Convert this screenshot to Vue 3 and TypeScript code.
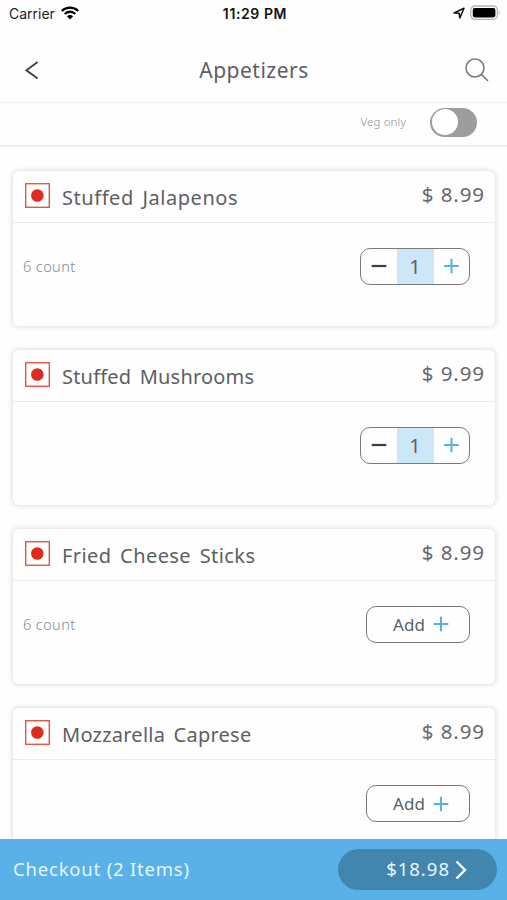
<script setup lang="ts">
import { computed, ref } from 'vue'

interface MenuItem {
  name: string
  note: string
  price: number
  quantity: number
  tracking: number
}

const vegOnly = ref(false)
const items = ref<MenuItem[]>([
  { name: 'Stuffed Jalapenos', note: '6 count', price: 8.99, quantity: 1, tracking: 0.55 },
  { name: 'Stuffed Mushrooms', note: '', price: 9.99, quantity: 1, tracking: 0.2 },
  { name: 'Fried Cheese Sticks', note: '6 count', price: 8.99, quantity: 0, tracking: 0.42 },
  { name: 'Mozzarella Caprese', note: '', price: 8.99, quantity: 0, tracking: 0.24 },
])

const count = computed(() => items.value.reduce((sum, i) => sum + i.quantity, 0))
const total = computed(() => items.value.reduce((sum, i) => sum + i.quantity * i.price, 0))
</script>

<template>
  <div class="screen">
    <div class="status">
      <div class="status-left">
        <span>Carrier</span>
        <svg class="wifi" viewBox="0 0 18 14" width="18" height="14">
          <path d="M0.8 5 A11.6 11.6 0 0 1 17.2 5" />
          <path d="M3.7 8 A7.4 7.4 0 0 1 14.3 8" />
          <path class="solid" d="M9 13.5 L5.9 10.3 A4.3 4.3 0 0 1 12.1 10.3 Z" />
        </svg>
      </div>
      <span class="clock">11:29 PM</span>
      <div class="status-right">
        <svg viewBox="0 0 12 12" width="12" height="12">
          <path class="arrow" d="M1 6 L11 1.2 L6.8 11 L6.2 6.2 Z" />
        </svg>
        <svg viewBox="0 0 31 16" width="31" height="16">
          <rect x="0.8" y="1" width="26.6" height="13.4" rx="4.2" fill="#fff" stroke="#b5b5b5" stroke-width="1.3" />
          <rect x="2.8" y="3" width="22.6" height="9.4" rx="2" fill="#000" />
          <path d="M28.8 5.3 Q30.8 7.7 28.8 10.1 Z" fill="#b5b5b5" />
        </svg>
      </div>
    </div>

    <header class="navbar">
      <svg class="back" viewBox="0 0 14 18" width="14" height="18">
        <path d="M12.6 1 L1.4 9.3 L12.6 17.4" />
      </svg>
      <h1>Appetizers</h1>
      <svg class="search" viewBox="0 0 24 24" width="24" height="24">
        <circle cx="10" cy="10" r="9" />
        <path d="M16.4 16.4 L23 23" />
      </svg>
    </header>

    <div class="filter">
      <span>Veg only</span>
      <button class="toggle" :class="{ on: vegOnly }" aria-label="Veg only" @click="vegOnly = !vegOnly">
        <i />
      </button>
    </div>

    <main class="list">
      <article v-for="item in items" :key="item.name" class="card">
        <div class="card-head">
          <svg class="mark" viewBox="0 0 25 25" width="25" height="25">
            <rect x="0.7" y="0.7" width="23.6" height="23.6" />
            <circle cx="12.3" cy="12.5" r="6.3" />
          </svg>
          <h2 :style="{ letterSpacing: `${item.tracking}px` }">{{ item.name }}</h2>
          <span class="price">$ {{ item.price.toFixed(2) }}</span>
        </div>
        <div class="card-body">
          <span class="note">{{ item.note }}</span>
          <div v-if="item.quantity > 0" class="stepper">
            <button aria-label="Remove one" @click="item.quantity--">
              <svg viewBox="0 0 16 16" width="16" height="16"><path class="minus" d="M0.7 8 H15.3" /></svg>
            </button>
            <span class="qty">{{ item.quantity }}</span>
            <button aria-label="Add one" @click="item.quantity++">
              <svg viewBox="0 0 16 16" width="16" height="16"><path class="plus" d="M1.2 8 H15.8 M8.5 0.7 V15.3" /></svg>
            </button>
          </div>
          <button v-else class="add" @click="item.quantity++">
            <span>Add</span>
            <svg viewBox="0 0 16 16" width="16" height="16"><path class="plus" d="M0.7 8 H15.3 M8 0.7 V15.3" /></svg>
          </button>
        </div>
      </article>
    </main>

    <footer class="checkout">
      <span class="summary">Checkout ({{ count }} Items)</span>
      <button class="total">
        <span>${{ total.toFixed(2) }}</span>
        <svg viewBox="0 0 12 20" width="12" height="20"><path d="M1.5 1.5 L10 10 L1.5 18.5" /></svg>
      </button>
    </footer>
  </div>
</template>

<style>
body {
  margin: 0;
  background: #fff;
}
</style>

<style scoped>
.screen {
  display: flex;
  flex-direction: column;
  width: 507px;
  height: 900px;
  overflow: hidden;
  background: #fefefe;
  color: #5d5e64;
  font-family: 'Noto Sans', sans-serif;
}

button {
  margin: 0;
  padding: 0;
  border: 0;
  background: none;
  color: inherit;
  font: inherit;
}

svg {
  display: block;
  flex: none;
  fill: none;
}

.status {
  display: grid;
  grid-template-columns: 1fr auto 1fr;
  align-items: center;
  flex: none;
  height: 27px;
  padding: 0 6px 0 9px;
  box-sizing: border-box;
  font-family: Inter, sans-serif;
  font-size: 14px;
  color: #222;
}

.status-left,
.status-right {
  display: flex;
  align-items: center;
  gap: 6px;
}

.status-left svg {
  margin-top: -2px;
}

.status-right {
  justify-content: flex-end;
  gap: 5px;
}

.status-right svg {
  margin-top: -1px;
}

.clock {
  color: #111;
  font-weight: 600;
  letter-spacing: 0.6px;
}

.wifi path {
  stroke: #000;
  stroke-width: 2.3;
}

.wifi .solid {
  fill: #000;
  stroke: none;
}

.arrow {
  stroke: #111;
  stroke-width: 1.5;
  stroke-linejoin: round;
}

.navbar {
  display: grid;
  grid-template-columns: 1fr auto 1fr;
  align-items: center;
  flex: none;
  height: 76px;
  padding: 10px 18px 0 25px;
  box-sizing: border-box;
  border-bottom: 1px solid #efefef;
}

.back path {
  stroke: #3c3c3c;
  stroke-width: 1.8;
}

h1 {
  margin: 1px 6px 0 0;
  font-size: 21px;
  line-height: 30px;
  font-weight: 400;
  letter-spacing: 0.5px;
}

.search {
  justify-self: end;
}

.search circle,
.search path {
  stroke: #77777b;
  stroke-width: 1.5;
}

.filter {
  display: flex;
  align-items: center;
  justify-content: flex-end;
  flex: none;
  gap: 24px;
  height: 44px;
  padding: 0 30px 4px 0;
  box-sizing: border-box;
  border-bottom: 2px solid #ececec;
  color: #8c8c90;
  font-size: 11.5px;
  font-weight: 300;
  letter-spacing: 0.15px;
}

.filter span {
  margin-top: -2px;
}

.toggle {
  display: flex;
  width: 47px;
  height: 29px;
  padding: 1.5px;
  box-sizing: border-box;
  border-radius: 15px;
  background: #9d9d9d;
}

.toggle.on {
  justify-content: flex-end;
  background: #5ab1e8;
}

.toggle i {
  width: 26px;
  height: 26px;
  border-radius: 50%;
  background: #fff;
}

.list {
  display: flex;
  flex-direction: column;
  flex: 1;
  min-height: 0;
  gap: 24px;
  padding: 23.6px 12px 0 13px;
  overflow: hidden;
}

.card {
  flex: none;
  height: 155.2px;
  border-radius: 6px;
  background: #fefefe;
  box-shadow: 0 0 5px 1px rgba(0, 0, 0, 0.13);
}

.card-head {
  display: flex;
  height: 52px;
  padding: 0 10px 0 12px;
  box-sizing: border-box;
  border-bottom: 1px solid #ebebed;
}

.mark {
  margin-top: 12px;
}

.mark rect {
  stroke: #e4554c;
  stroke-width: 1.4;
}

.mark circle {
  fill: #df2a20;
}

h2 {
  flex: 1;
  margin: 12px 0 0 12px;
  font-size: 20px;
  line-height: 30px;
  font-weight: 400;
  white-space: nowrap;
  word-spacing: 3px;
}

.price {
  margin-top: 8px;
  color: #66676d;
  font-size: 20.5px;
  line-height: 30px;
  letter-spacing: 0.9px;
  white-space: nowrap;
}

.card-body {
  display: flex;
  align-items: flex-start;
  justify-content: space-between;
  padding: 25px 25px 0 10px;
}

.note {
  margin-top: 8px;
  color: #88888d;
  font-size: 14.5px;
  font-weight: 300;
  line-height: 20px;
  letter-spacing: 0.4px;
}

.stepper {
  display: grid;
  grid-template-columns: 1fr 37px 1fr;
  width: 110px;
  height: 37px;
  box-sizing: border-box;
  border: 1.5px solid #79797c;
  border-radius: 10px;
}

.stepper button {
  display: flex;
  align-items: center;
  justify-content: center;
}

.minus {
  stroke: #3d3d3f;
  stroke-width: 2.2;
}

.plus {
  stroke: #55b0e7;
  stroke-width: 2;
}

.qty {
  background: #cce7f7;
  font-size: 20px;
  line-height: 35px;
  text-align: center;
}

.add {
  display: flex;
  align-items: center;
  justify-content: center;
  gap: 8px;
  width: 104px;
  height: 37px;
  padding-left: 6px;
  box-sizing: border-box;
  border: 1.5px solid #79797c;
  border-radius: 10px;
  font-size: 17px;
}

.checkout {
  display: flex;
  align-items: center;
  justify-content: space-between;
  flex: none;
  height: 61px;
  padding: 0 10px 0 13px;
  box-sizing: border-box;
  background: #59b1e7;
  color: #e6f6ff;
}

.summary {
  margin-bottom: 3px;
  font-size: 18.5px;
  letter-spacing: 0.8px;
}

.total {
  display: flex;
  align-items: center;
  justify-content: flex-end;
  gap: 5px;
  width: 159px;
  height: 41px;
  padding-right: 30px;
  box-sizing: border-box;
  border-radius: 21px;
  background: #4286ae;
  font-size: 18.5px;
  letter-spacing: 1px;
}

.total span {
  margin-bottom: 3px;
}

.total path {
  stroke: #fff;
  stroke-width: 2.4;
}
</style>
